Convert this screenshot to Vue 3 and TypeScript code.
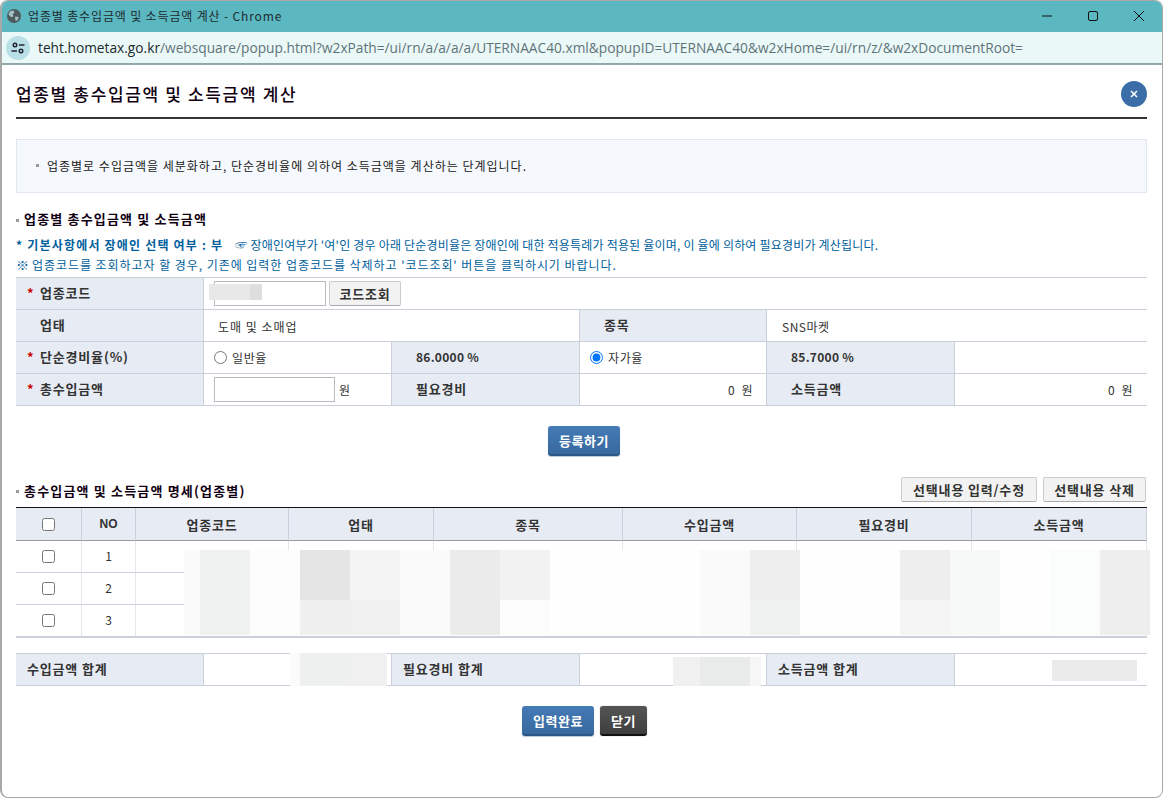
<script setup lang="ts">
interface Block { x: number; y: number; w: number; h: number; c: string }

const blocks: Block[] = [
  { x: 209, y: 284, w: 41, h: 16, c: '#e8e8e8' },
  { x: 250, y: 284, w: 12, h: 16, c: '#dedede' },
  { x: 184, y: 550, w: 16, h: 85, c: '#fafafa' },
  { x: 200, y: 550, w: 50, h: 85, c: '#f0f1f1' },
  { x: 250, y: 550, w: 50, h: 85, c: '#fdfdfd' },
  { x: 300, y: 550, w: 50, h: 50, c: '#e5e5e5' },
  { x: 350, y: 550, w: 50, h: 50, c: '#f3f3f3' },
  { x: 400, y: 550, w: 50, h: 85, c: '#fafafa' },
  { x: 300, y: 600, w: 50, h: 35, c: '#efefef' },
  { x: 350, y: 600, w: 50, h: 35, c: '#f0f0f0' },
  { x: 450, y: 550, w: 50, h: 85, c: '#ebebeb' },
  { x: 500, y: 550, w: 50, h: 50, c: '#f2f2f2' },
  { x: 500, y: 600, w: 50, h: 35, c: '#fcfcfc' },
  { x: 550, y: 550, w: 150, h: 85, c: '#fefefe' },
  { x: 700, y: 550, w: 50, h: 85, c: '#fafafa' },
  { x: 750, y: 550, w: 50, h: 50, c: '#eeeeee' },
  { x: 750, y: 600, w: 50, h: 35, c: '#f0f1f1' },
  { x: 800, y: 550, w: 100, h: 85, c: '#fefefe' },
  { x: 900, y: 550, w: 50, h: 50, c: '#eeeeee' },
  { x: 900, y: 600, w: 50, h: 35, c: '#f5f5f5' },
  { x: 950, y: 550, w: 50, h: 85, c: '#f7f8f8' },
  { x: 1000, y: 550, w: 50, h: 85, c: '#fefefe' },
  { x: 1050, y: 550, w: 50, h: 85, c: '#fbfcfc' },
  { x: 1100, y: 550, w: 50, h: 85, c: '#eeeeee' },
  { x: 290, y: 653, w: 10, h: 33, c: '#fbfbfb' },
  { x: 300, y: 653, w: 50, h: 33, c: '#eef0ef' },
  { x: 350, y: 653, w: 37, h: 33, c: '#f0f0f0' },
  { x: 673, y: 657, w: 27, h: 29, c: '#f0f0f0' },
  { x: 700, y: 657, w: 50, h: 29, c: '#e9eaea' },
  { x: 750, y: 657, w: 11, h: 29, c: '#f6f6f6' },
  { x: 1052, y: 660, w: 85, h: 21, c: '#ebebeb' },
]

const gridHeads = ['NO', '업종코드', '업태', '종목', '수입금액', '필요경비', '소득금액']
const rows = [1, 2, 3]
const url = 'websquare/popup.html?w2xPath=/ui/rn/a/a/a/a/UTERNAAC40.xml&popupID=UTERNAAC40&w2xHome=/ui/rn/z/&w2xDocumentRoot='

function blockStyle(b: Block) {
  return {
    left: `${b.x}px`,
    top: `${b.y}px`,
    width: `${b.w}px`,
    height: `${b.h}px`,
    background: b.c,
  }
}
</script>

<template>
  <div class="win">
    <header class="titlebar">
      <svg class="globe" viewBox="0 0 14 14" width="14" height="14">
        <circle cx="7" cy="7" r="7" fill="#4d5a5e" />
        <path d="M3 2.2 6.5 1.5 7.5 3.6 5.6 5.2 6.6 7.2 4.4 8.2 1.4 5.6Z" fill="#a5c3c7" />
        <path d="M8.4 7.6 11.8 7.9 10.6 11 8.9 12 8 9.8Z" fill="#a5c3c7" />
      </svg>
      <span class="win-title">업종별 총수입금액 및 소득금액 계산 - Chrome</span>
      <div class="win-ctrl">
        <svg viewBox="0 0 12 12" width="12" height="12"><path d="M1 6h10" stroke="#111" stroke-width="1" fill="none" /></svg>
        <svg viewBox="0 0 12 12" width="12" height="12"><rect x="1.5" y="1.5" width="9" height="9" rx="1.5" stroke="#111" stroke-width="1" fill="none" /></svg>
        <svg viewBox="0 0 12 12" width="12" height="12"><path d="M1 1l10 10M11 1 1 11" stroke="#111" stroke-width="1" fill="none" /></svg>
      </div>
    </header>
    <div class="addressbar">
      <span class="site-ico">
        <svg viewBox="0 0 16 16" width="16" height="16">
          <circle cx="5" cy="5" r="1.8" fill="none" stroke="#223" stroke-width="1.4" />
          <path d="M9 5h5.5M1.5 11H7" stroke="#223" stroke-width="1.4" fill="none" />
          <circle cx="11" cy="11" r="1.8" fill="none" stroke="#223" stroke-width="1.4" />
        </svg>
      </span>
      <span class="url"><b>teht.hometax.go.kr</b>/{{ url }}</span>
    </div>

    <main class="page">
      <div class="head">
        <h1>업종별 총수입금액 및 소득금액 계산</h1>
        <button class="close" aria-label="닫기">
          <svg viewBox="0 0 10 10" width="10" height="10"><path d="M2 2l6 6M8 2 2 8" stroke="#fff" stroke-width="1.5" fill="none" /></svg>
        </button>
      </div>

      <div class="info"><i class="sq"></i>업종별로 수입금액을 세분화하고, 단순경비율에 의하여 소득금액을 계산하는 단계입니다.</div>

      <h2 class="sec first"><i class="sq"></i>업종별 총수입금액 및 소득금액</h2>
      <div class="notes">
        <p class="n1"><b>* 기본사항에서 장애인 선택 여부 : 부</b><span class="hand">☞</span>장애인여부가 '여'인 경우 아래 단순경비율은 장애인에 대한 적용특례가 적용된 율이며, 이 율에 의하여 필요경비가 계산됩니다.</p>
        <p class="n2"><span class="mark">※</span>업종코드를 조회하고자 할 경우, 기존에 입력한 업종코드를 삭제하고 '코드조회' 버튼을 클릭하시기 바랍니다.</p>
      </div>

      <div class="form">
        <div class="th"><em>*</em>업종코드</div>
        <div class="td span5 pad-input"><span class="input code"></span><button class="btn-gray lookup">코드조회</button></div>

        <div class="th"><em class="blank"></em>업태</div>
        <div class="td span2 txt">도매 및 소매업</div>
        <div class="th mid">종목</div>
        <div class="td span2 txt tight">SNS마켓</div>

        <div class="th"><em>*</em>단순경비율(%)</div>
        <label class="td radio"><input type="radio" name="rate" />일반율</label>
        <div class="th mid val">86.0000 %</div>
        <label class="td radio"><input type="radio" name="rate" checked />자가율</label>
        <div class="th mid val">85.7000 %</div>
        <div class="td"></div>

        <div class="th"><em>*</em>총수입금액</div>
        <div class="td pad-input"><span class="input amount"></span><span class="unit">원</span></div>
        <div class="th mid">필요경비</div>
        <div class="td num">0 &nbsp;원</div>
        <div class="th mid">소득금액</div>
        <div class="td num last">0 &nbsp;원</div>
      </div>

      <div class="actions reg"><button class="btn-blue wide">등록하기</button></div>

      <div class="sec-row">
        <h2 class="sec"><i class="sq"></i>총수입금액 및 소득금액 명세(업종별)</h2>
        <div class="sec-btns">
          <button class="btn-gray w136">선택내용 입력/수정</button>
          <button class="btn-gray w103">선택내용 삭제</button>
        </div>
      </div>

      <div class="grid">
        <div class="gh"><input type="checkbox" /></div>
        <div v-for="h in gridHeads" :key="h" class="gh" :class="{ en: h === 'NO' }">{{ h }}</div>
        <template v-for="r in rows" :key="r">
          <div class="gd"><input type="checkbox" /></div>
          <div class="gd no">{{ r }}</div>
          <div class="gd"></div>
          <div class="gd"></div>
          <div class="gd"></div>
          <div class="gd"></div>
          <div class="gd"></div>
          <div class="gd"></div>
        </template>
      </div>

      <div class="sum">
        <div class="th left">수입금액 합계</div>
        <div class="td"></div>
        <div class="th left">필요경비 합계</div>
        <div class="td"></div>
        <div class="th left">소득금액 합계</div>
        <div class="td"></div>
      </div>

      <div class="actions done">
        <button class="btn-blue wide">입력완료</button>
        <button class="btn-dark">닫기</button>
      </div>
    </main>

    <div class="redactions">
      <span v-for="(b, i) in blocks" :key="i" class="block" :style="blockStyle(b)"></span>
    </div>
  </div>
</template>

<style>
html, body { margin: 0; background: #fff; }
</style>

<style scoped>
* { box-sizing: border-box; }
.win {
  position: relative;
  width: 1163px;
  height: 798px;
  overflow: hidden;
  background: #fff;
  border: 1px solid #a9a9a9;
  border-left-width: 2px;
  border-radius: 8px;
  font-family: "Noto Sans CJK KR", "Noto Sans", sans-serif;
  font-size: 12px;
  color: #222;
}
.titlebar {
  display: flex;
  align-items: center;
  height: 31px;
  padding: 0 0 2px 5px;
  background: #5bb7c0;
}
.globe { flex: none; }
.win-title { margin-left: 7px; font-size: 12px; letter-spacing: .85px; color: #1d2c30; }
.win-ctrl {
  display: flex;
  align-items: center;
  gap: 34px;
  margin-left: auto;
  padding-right: 17px;
}
.addressbar {
  display: flex;
  align-items: center;
  height: 33px;
  padding-left: 4px;
  background: #ebf8f8;
  border-bottom: 2px solid #8fa8ab;
}
.site-ico {
  display: flex;
  align-items: center;
  justify-content: center;
  width: 24px;
  height: 24px;
  border-radius: 50%;
  background: #b9e0e6;
}
.url {
  margin-left: 8px;
  font-family: "Open Sans", sans-serif;
  font-size: 13.73px;
  color: #5e7478;
  white-space: nowrap;
}
.url b { font-weight: 400; color: #1c2a2d; }

.page { padding: 0 15px 0 14px; }
.head {
  display: flex;
  align-items: center;
  justify-content: space-between;
  height: 54px;
  padding-top: 4px;
  border-bottom: 2px solid #333;
}
h1 {
  margin: 0;
  font-size: 17px;
  font-weight: 500;
  letter-spacing: 1.65px;
  color: #110011;
}
.close {
  display: flex;
  align-items: center;
  justify-content: center;
  width: 26px;
  height: 26px;
  margin: 0 0 -1px 0;
  padding: 0;
  border: 0;
  border-radius: 50%;
  background: #3b6ea9;
}
.info {
  display: flex;
  align-items: center;
  height: 54px;
  margin-top: 20px;
  padding-left: 19px;
  padding-bottom: 1px;
  background: #f5f8fc;
  border: 1px solid #e1e7f0;
  font-size: 12px;
  letter-spacing: 1px;
  color: #222;
}
.sq {
  flex: none;
  display: inline-block;
  width: 3px;
  height: 3px;
  margin-right: 5px;
  background: #999;
  vertical-align: middle;
}
.info .sq { margin-right: 8px; }
.sec {
  margin: 0;
  font-size: 13px;
  font-weight: 700;
  letter-spacing: 1.17px;
  line-height: 20px;
  color: #110011;
}
.sec.first { margin-top: 16px; }
.notes { margin-top: 6px; color: #00609c; font-size: 12px; }
.notes p { margin: 0; line-height: 20px; white-space: nowrap; }
.n1 { letter-spacing: .2px; }
.n2 { letter-spacing: .95px; }
.notes b { font-weight: 700; letter-spacing: 1.2px; margin-right: 12px; }
.hand { margin-right: 3px; }
.mark { font-size: 13px; margin-right: 3px; letter-spacing: 0; }

.form {
  display: grid;
  grid-template-columns: 188px 188px 188px 187px 188px 192px;
  grid-auto-rows: 32px;
  margin-top: 2px;
  height: 129px;
  border-top: 1px solid #c9d0dc;
}
.th, .td {
  display: flex;
  align-items: center;
  border-bottom: 1px solid #c9d0dc;
}
.th {
  padding-left: 11px;
  padding-bottom: 2px;
  background: #e7ebf4;
  border-right: 1px solid #c9d0dc;
  font-size: 13px;
  font-weight: 700;
  color: #333;
  letter-spacing: .82px;
}
.th em {
  display: inline-block;
  width: 13px;
  font-style: normal;
  color: #c00;
  font-weight: 700;
}
.th.mid { padding-left: 24px; }
.th.val { font-size: 12px; letter-spacing: .27px; }
.td { border-right: 1px solid #c9d0dc; color: #333; }
.td:nth-child(6n) { border-right: 0; }
.span5 { grid-column: span 5; border-right: 0; }
.span2 { grid-column: span 2; }
.span2:last-child, .tight { border-right: 0; }
.txt { padding-left: 14px; padding-top: 2px; letter-spacing: 1px; }
.tight { padding-left: 15px; letter-spacing: .5px; }
.pad-input { padding-left: 10px; }
.input {
  display: block;
  height: 25px;
  background: #fff;
  border: 1px solid #bbb;
}
.code { width: 112px; }
.amount { width: 121px; }
.unit { margin-left: 4px; }
.lookup { margin-left: 3px; width: 72px; }
.radio { padding-left: 10px; padding-bottom: 1px; letter-spacing: .6px; }
.radio input { margin: 0 5px 0 0; }
.num { justify-content: flex-end; padding-right: 13px; letter-spacing: .45px; }
.num.last { padding-right: 14px; }

.actions { display: flex; justify-content: center; gap: 6px; padding-left: 6px; }
.reg { margin-top: 20px; padding-left: 5px; }
button { font-family: inherit; cursor: pointer; }
.btn-blue, .btn-dark {
  height: 30px;
  padding: 0;
  border: 0;
  border-radius: 3px;
  font-size: 13px;
  font-weight: 700;
  letter-spacing: .6px;
  color: #fff;
}
.btn-blue {
  background: linear-gradient(#447ab6, #38699f);
  border-bottom: 2px solid #2b5586;
  box-shadow: 0 1px 1px #b9c6d6;
}
.btn-dark {
  width: 47px;
  background: linear-gradient(#555, #3e3e3e);
  border-bottom: 2px solid #111;
  box-shadow: 0 0 1px #777;
}
.wide { width: 72px; }
.btn-gray {
  height: 25px;
  padding: 0;
  background: #f2f2f2;
  border: 1px solid #ccc;
  border-bottom-color: #aaa;
  border-radius: 2px;
  font-size: 13px;
  font-weight: 700;
  letter-spacing: .82px;
  color: #333;
  white-space: nowrap;
}
.w136 { width: 136px; }
.w103 { width: 103px; }
.sec-row {
  display: flex;
  align-items: center;
  justify-content: space-between;
  height: 25px;
  margin-top: 21px;
}
.sec-row .sec { padding-top: 2px; }
.sec-btns { display: flex; gap: 6px; padding-right: 1px; }
.grid {
  display: grid;
  grid-template-columns: 66px 54px 153px 145px 189px 174px 175px 175px;
  grid-template-rows: 33px repeat(3, 32px);
  margin-top: 5px;
  height: 131px;
  border-top: 1px solid #111;
  border-bottom: 1px solid #c9d0dc;
}
.gh {
  display: flex;
  align-items: center;
  justify-content: center;
  background: #e7ebf4;
  border-right: 1px solid #c9d0dc;
  border-bottom: 1px solid #999;
  font-size: 13px;
  font-weight: 700;
  letter-spacing: .82px;
  color: #333;
}
.gh.en { font-family: "Liberation Sans", sans-serif; font-size: 12px; letter-spacing: 0; }
.gd {
  display: flex;
  align-items: center;
  justify-content: center;
  border-right: 1px solid #e3e6ec;
  border-bottom: 1px solid #c9d0dc;
  color: #333;
}
.gd.no { padding-bottom: 2px; }
.gh input, .gd input { margin: 0; }
.sum {
  display: grid;
  grid-template-columns: 188px 188px 188px 187px 188px 192px;
  grid-auto-rows: 32px;
  height: 33px;
  margin-top: 15px;
  border-top: 1px solid #c9d0dc;
}
.th.left { padding-left: 11px; }
.done { margin-top: 20px; }
.redactions { position: absolute; inset: -1px 0 0 -2px; pointer-events: none; }
.block { position: absolute; display: block; }
</style>
